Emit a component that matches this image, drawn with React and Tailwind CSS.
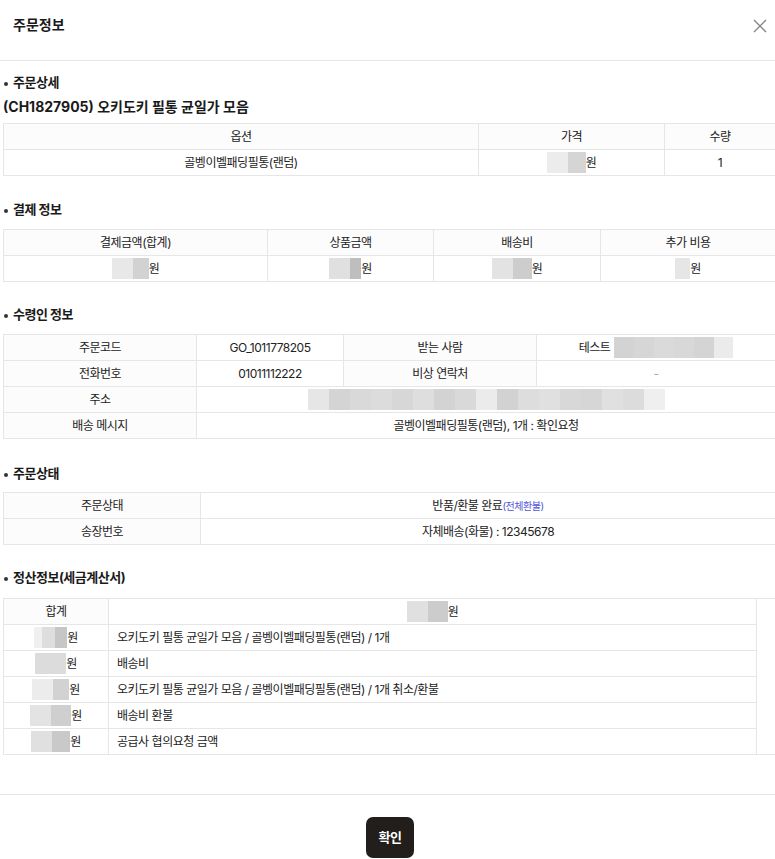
import React from "react";

const B = ({ segs }) => (
  <span className="inline-flex h-[21px]">
    {segs.map(([w, c], i) => (
      <span key={i} className="h-full" style={{ width: w, background: c }} />
    ))}
  </span>
);

const Won = ({ segs }) => (
  <span className="inline-flex items-center">
    <B segs={segs} />
    <span>원</span>
  </span>
);

const Heading = ({ children, className }) => (
  <div className={"flex items-center h-[20px] pl-[1px] text-[13px] font-bold text-[#1a1a1a] " + className}>
    <span className="w-[4px] h-[4px] rounded-full bg-[#333] mr-[5px] mt-[1px]" />
    <span>{children}</span>
  </div>
);

const C = ({ children, head, last, className = "" }) => (
  <div
    className={
      "flex items-center justify-center h-[26px] border-b border-[#e6e6e6] text-[12px] text-[#222] " +
      (last ? "" : "border-r ") +
      (head ? "bg-[#fcfcfc] " : "bg-white ") +
      className
    }
  >
    {children}
  </div>
);

const addr = [
  [21, "#e6e6e6"], [21, "#d4d4d4"], [21, "#d9d9d9"], [21, "#dcdcdc"], [21, "#d7d7d7"],
  [21, "#dedede"], [21, "#d3d3d3"], [21, "#d9d9d9"], [21, "#ebebeb"], [21, "#d2d2d2"],
  [21, "#dddddd"], [21, "#e0e0e0"], [21, "#d8d8d8"], [21, "#d6d6d6"], [21, "#e0e0e0"],
  [21, "#dcdcdc"], [21, "#efefef"],
];

const name = [
  [20, "#d3d3d3"], [20, "#d6d6d6"], [20, "#dadada"], [20, "#d8d8d8"], [20, "#d4d4d4"], [19, "#ebebeb"],
];

export default function App() {
  return (
    <div className="w-[775px] h-[859px] overflow-hidden bg-white font-['Inter','Noto_Sans_CJK_KR',sans-serif] tracking-[-0.03em] text-[#222]">
      {/* header */}
      <div className="flex items-start justify-between h-[61px] border-b border-[#e6e6e6] pt-[15px] pl-[13px] pr-[8px]">
        <div className="text-[14px] leading-[20px] font-bold text-[#1a1a1a] tracking-normal">주문정보</div>
        <svg width="14" height="14" viewBox="0 0 14 14" className="mt-[4px]">
          <path d="M1 1 L13 13 M13 1 L1 13" stroke="#888" strokeWidth="1.4" fill="none" />
        </svg>
      </div>

      <div className="pl-[3px]">
        <Heading className="mt-[12px]">주문상세</Heading>
        <div className="mt-[4px] h-[20px] leading-[20px] text-[14px] font-bold text-[#1a1a1a] tracking-normal">
          (CH1827905) 오키도키 필통 균일가 모음
        </div>

        {/* table 1 */}
        <div className="mt-[6px] border-t border-l border-[#e6e6e6]">
          <div className="grid grid-cols-[475px_186px_1fr]">
            <C head>옵션</C>
            <C head>가격</C>
            <C head last>수량</C>
          </div>
          <div className="grid grid-cols-[475px_186px_1fr]">
            <C>골벵이벨패딩필통(랜덤)</C>
            <C><Won segs={[[21, "#ececec"], [18, "#d5d5d5"]]} /></C>
            <C last>1</C>
          </div>
        </div>

        <Heading className="mt-[24px]">결제 정보</Heading>
        <div className="mt-[9px] border-t border-l border-[#e6e6e6]">
          <div className="grid grid-cols-[264px_166px_167px_1fr]">
            <C head>결제금액(합계)</C>
            <C head>상품금액</C>
            <C head>배송비</C>
            <C head last>추가 비용</C>
          </div>
          <div className="grid grid-cols-[264px_166px_167px_1fr]">
            <C><Won segs={[[21, "#e8e8e8"], [16, "#d2d2d2"]]} /></C>
            <C><Won segs={[[21, "#e0e0e0"], [11, "#bebebe"]]} /></C>
            <C><Won segs={[[21, "#e3e3e3"], [19, "#cdcdcd"]]} /></C>
            <C last><Won segs={[[15, "#e6e6e6"]]} /></C>
          </div>
        </div>

        <Heading className="mt-[23px]">수령인 정보</Heading>
        <div className="mt-[9px] border-t border-l border-[#e6e6e6]">
          <div className="grid grid-cols-[193px_147px_193px_1fr]">
            <C head>주문코드</C>
            <C>GO_1011778205</C>
            <C head>받는 사람</C>
            <C last>
              <span className="inline-flex items-center">
                <span className="mr-[4px]">테스트</span>
                <B segs={name} />
              </span>
            </C>
          </div>
          <div className="grid grid-cols-[193px_147px_193px_1fr]">
            <C head>전화번호</C>
            <C>01011112222</C>
            <C head>비상 연락처</C>
            <C last><span className="text-[#aaa]">-</span></C>
          </div>
          <div className="grid grid-cols-[193px_1fr]">
            <C head>주소</C>
            <C last><B segs={addr} /></C>
          </div>
          <div className="grid grid-cols-[193px_1fr]">
            <C head>배송 메시지</C>
            <C last>골벵이벨패딩필통(랜덤), 1개 : 확인요청</C>
          </div>
        </div>

        <Heading className="mt-[25px]">주문상태</Heading>
        <div className="mt-[8px] border-t border-l border-[#e6e6e6]">
          <div className="grid grid-cols-[197px_1fr]">
            <C head>주문상태</C>
            <C last>
              <span>
                반품/환불 완료<span className="text-[10px] text-[#4f52d9]">(전체환불)</span>
              </span>
            </C>
          </div>
          <div className="grid grid-cols-[197px_1fr]">
            <C head>송장번호</C>
            <C last>자체배송(화물) : 12345678</C>
          </div>
        </div>

        <Heading className="mt-[23px]">정산정보(세금계산서)</Heading>
        <div className="mt-[10px] border-t border-l border-[#e6e6e6] grid grid-cols-[105px_648px_1fr]">
          <C head className="col-start-1 row-start-1">합계</C>
          <C className="col-start-2 row-start-1"><Won segs={[[21, "#e0e0e0"], [20, "#cccccc"]]} /></C>

          <C className="col-start-1 row-start-2"><Won segs={[[8, "#f0f0f0"], [13, "#dedede"], [12, "#c6c6c6"]]} /></C>
          <C className="col-start-2 row-start-2 justify-start pl-[8px]">오키도키 필통 균일가 모음 / 골벵이벨패딩필통(랜덤) / 1개</C>

          <C className="col-start-1 row-start-3"><Won segs={[[31, "#dcdcdc"]]} /></C>
          <C className="col-start-2 row-start-3 justify-start pl-[8px]">배송비</C>

          <C className="col-start-1 row-start-4"><Won segs={[[21, "#ececec"], [16, "#d2d2d2"]]} /></C>
          <C className="col-start-2 row-start-4 justify-start pl-[8px]">오키도키 필통 균일가 모음 / 골벵이벨패딩필통(랜덤) / 1개 취소/환불</C>

          <C className="col-start-1 row-start-5"><Won segs={[[21, "#e3e3e3"], [20, "#cfcfcf"]]} /></C>
          <C className="col-start-2 row-start-5 justify-start pl-[8px]">배송비 환불</C>

          <C className="col-start-1 row-start-6"><Won segs={[[21, "#e0e0e0"], [18, "#c9c9c9"]]} /></C>
          <C className="col-start-2 row-start-6 justify-start pl-[8px]">공급사 협의요청 금액</C>

          <div className="col-start-3 row-start-1 row-span-6 border-b border-[#e6e6e6]" />
        </div>
      </div>

      {/* footer */}
      <div className="mt-[39px] border-t border-[#e6e6e6] pt-[22px] flex justify-center pl-[5px]">
        <button className="w-[48px] h-[41px] rounded-[7px] bg-[#211e1b] text-white text-[13px] font-bold">
          확인
        </button>
      </div>
    </div>
  );
}
